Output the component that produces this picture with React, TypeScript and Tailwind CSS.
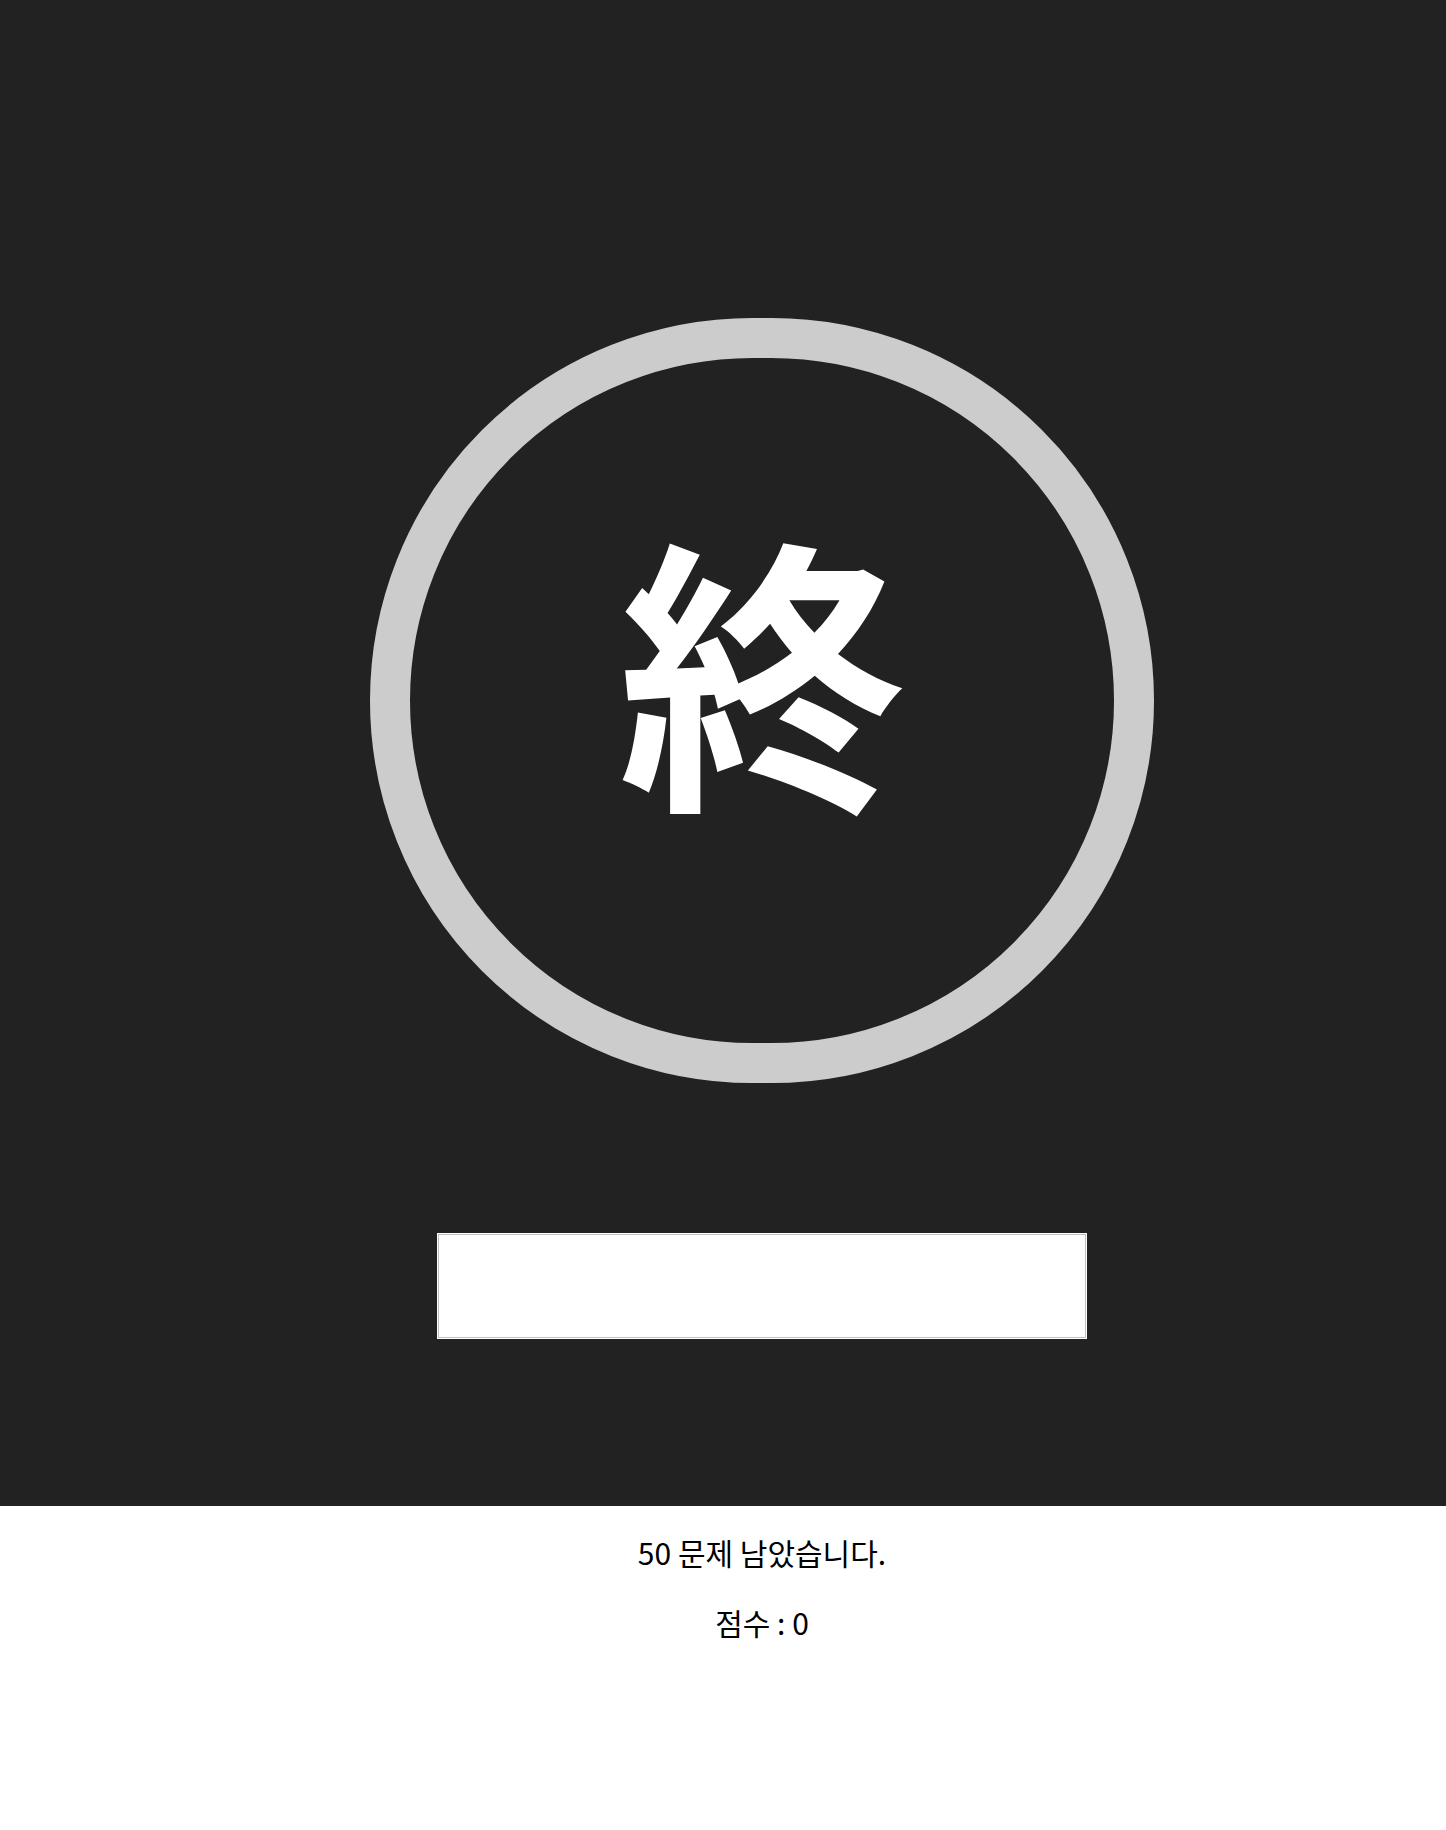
import React, { useState } from "react";

const KR = { fontFamily: '"Noto Sans CJK KR", "Noto Sans", sans-serif' };
const JP = { fontFamily: '"Noto Sans CJK JP", "Noto Sans CJK KR", sans-serif' };

function App() {
  const [answer, setAnswer] = useState("");
  const remain = 50;
  const score = 0;

  return (
    <div className="min-h-screen w-full bg-white" style={KR}>
      {/* quiz board */}
      <section className="flex h-[1506px] flex-col items-center bg-[#222222] pl-[78px] pt-[318px]">
        <div className="flex h-[765px] w-[784px] items-center justify-center rounded-full border-[40px] border-[#cccccc]">
          <span className="-mt-[76px] text-[288px] font-bold leading-none text-white" style={JP}>
            終
          </span>
        </div>
        <input
          value={answer}
          onChange={(e) => setAnswer(e.target.value)}
          className="mt-[151px] h-[104px] w-[648px] border border-[#c0c0c0] bg-white px-4 text-3xl outline outline-1 outline-white"
        />
      </section>

      {/* status */}
      <section className="flex flex-col items-center pl-[78px] pt-[24px] text-[30px] leading-[44px] text-black">
        <p>{remain} 문제 남았습니다.</p>
        <p className="mt-[26px]">점수 : {score}</p>
      </section>
    </div>
  );
}

export default App;
